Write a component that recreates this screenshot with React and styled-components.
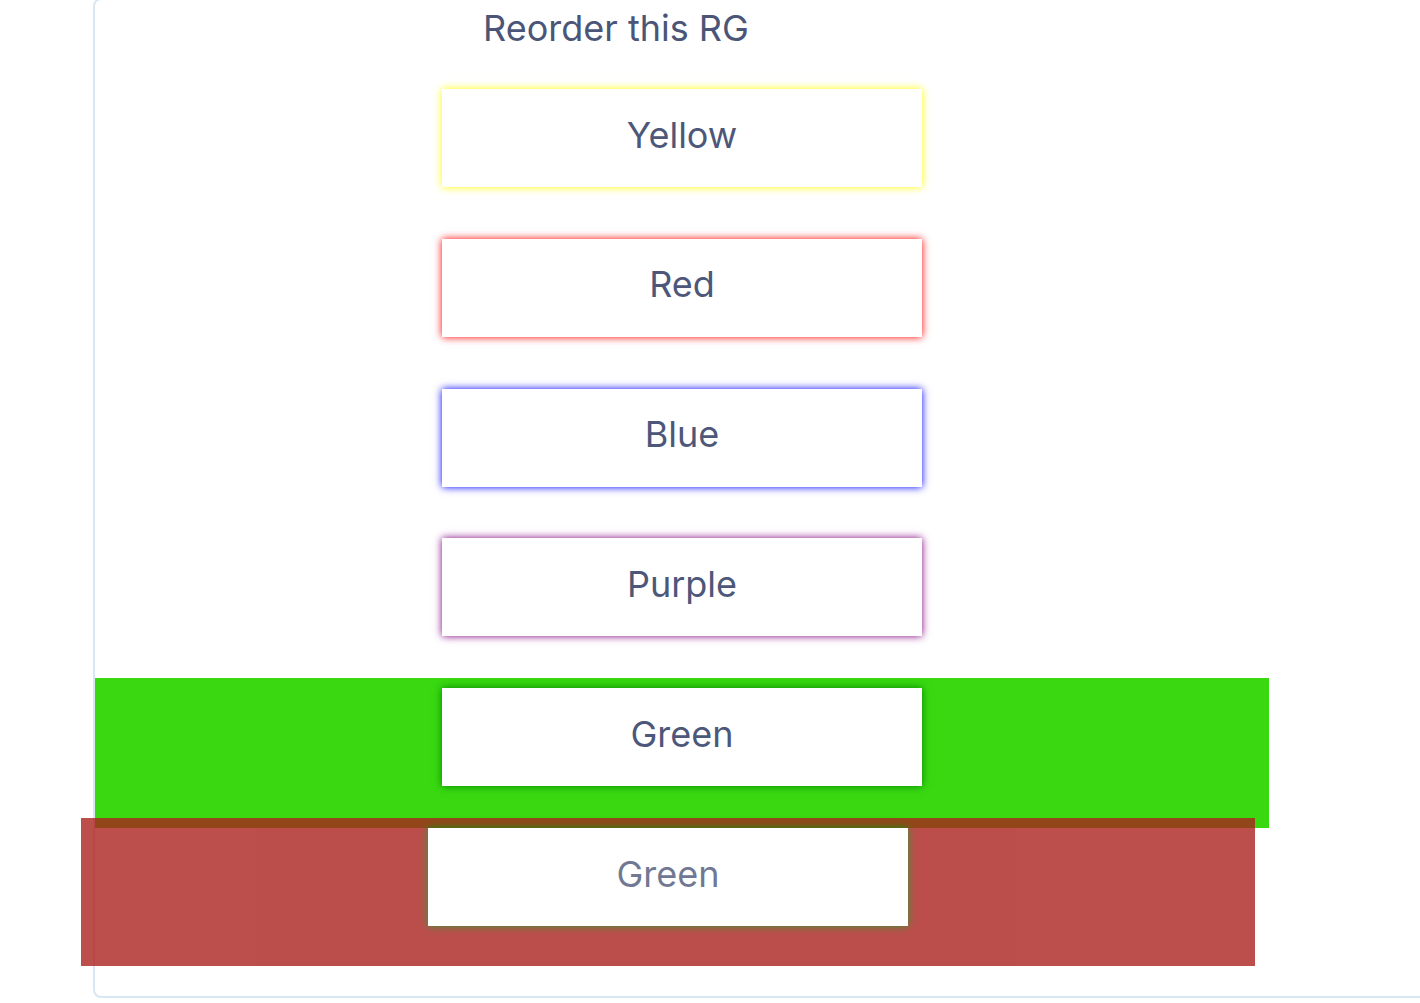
import React from "react";
import styled, { createGlobalStyle } from "styled-components";

const Global = createGlobalStyle`
  html, body {
    margin: 0;
    padding: 0;
    background: #ffffff;
    overflow: hidden;
    font-family: Inter, "Noto Sans", sans-serif;
  }
`;

const Frame = styled.div`
  position: relative;
  margin: -2px 0 0 93px;
  width: 1400px;
  height: 1000px;
  border: 2px solid #d9e6f4;
  border-radius: 8px;
  box-sizing: border-box;
`;

const Title = styled.h2`
  margin: 0 0 23px 388px;
  height: 56px;
  line-height: 56px;
  font-size: 36px;
  font-weight: 400;
  color: #4b5578;
  white-space: nowrap;
`;

const List = styled.div`
  display: flex;
  flex-direction: column;
  width: 1174px;
`;

const Row = styled.div`
  display: flex;
  justify-content: center;
  align-items: flex-start;
  box-sizing: border-box;
  height: 149.75px;
  padding-top: 10px;
  background: ${(p) => (p.$over ? "rgb(57, 216, 17)" : "transparent")};
`;

const Item = styled.div`
  width: 480px;
  height: 98px;
  box-sizing: border-box;
  padding-bottom: 7px;
  display: flex;
  align-items: center;
  justify-content: center;
  background: #ffffff;
  box-shadow: 0 0 8px ${(p) => p.$glow};
  font-size: 36px;
  color: #4d5779;
`;

const Ghost = styled.div`
  position: absolute;
  left: -14px;
  top: 818px;
  width: 1174px;
  height: 148px;
  box-sizing: border-box;
  display: flex;
  justify-content: center;
  align-items: flex-start;
  padding-top: 10px;
  background: rgb(171, 34, 30);
  opacity: 0.8;
`;

const items = [
  { label: "Yellow", glow: "yellow" },
  { label: "Red", glow: "red" },
  { label: "Blue", glow: "blue" },
  { label: "Purple", glow: "purple" },
  { label: "Green", glow: "green", over: true },
];

export default function App() {
  return (
    <>
      <Global />
      <Frame>
        <Title>Reorder this RG</Title>
        <List>
          {items.map((it) => (
            <Row key={it.label} $over={it.over}>
              <Item $glow={it.glow}>{it.label}</Item>
            </Row>
          ))}
        </List>
        <Ghost>
          <Item $glow="green">Green</Item>
        </Ghost>
      </Frame>
    </>
  );
}
